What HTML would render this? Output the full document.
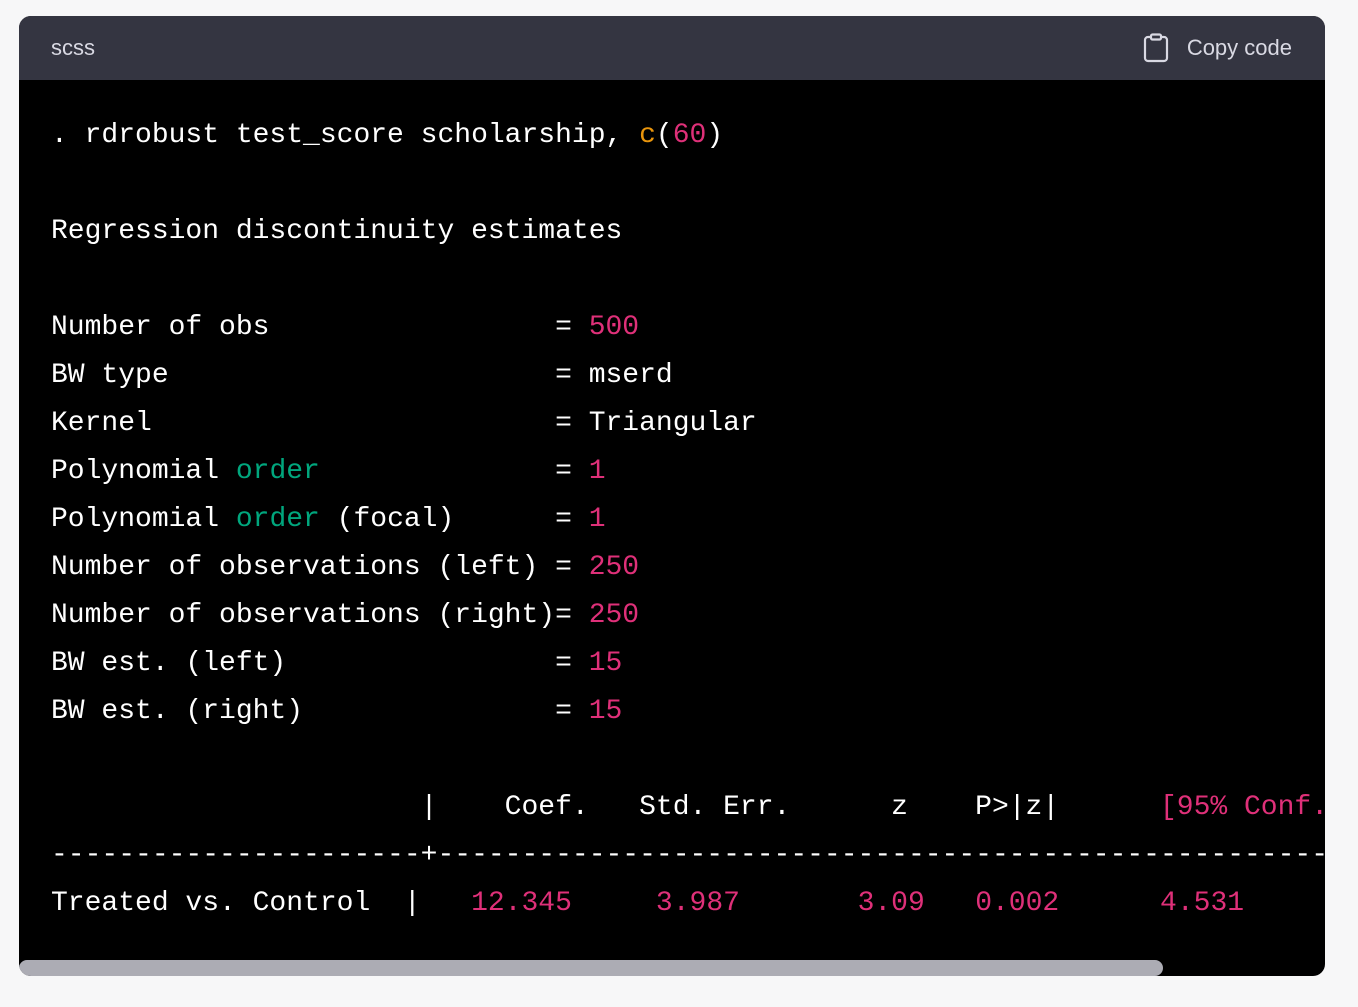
<!DOCTYPE html>
<html><head><style>
body{margin:0;background:#f7f7f8;width:1358px;height:1007px;overflow:hidden}
.box{position:absolute;left:19px;top:16px;width:1306px;height:960px;background:#000;border-radius:12px;overflow:hidden}
.hd{height:64px;background:#343541;color:#d9d9e3;font:22px "Liberation Sans",sans-serif;display:flex;align-items:center;justify-content:space-between;padding:0 33px 0 32px}
.cp{display:flex;align-items:center;gap:18px}
pre{margin:0;position:absolute;left:32px;top:96px;font:28px/48px "Liberation Mono",monospace;color:#fff;white-space:pre}
.p{color:#df3079}.g{color:#00a67d}.o{color:#e9950c}
.sb{position:absolute;left:0;top:944px;width:1144px;height:16px;background:#acacb4;border-radius:8px}
</style></head><body>
<div class="box">
<div class="hd"><span>scss</span><span class="cp"><svg width="26" height="30" viewBox="0 0 26 30" fill="none" stroke="#d9d9e3" stroke-width="2.2" stroke-linejoin="round"><rect x="2" y="4" width="22" height="24" rx="3"/><rect x="8" y="1.5" width="10" height="5" rx="1.5" fill="#343541"/></svg>Copy code</span></div>
<pre>. rdrobust test_score scholarship, <span class="o">c</span>(<span class="p">60</span>)

Regression discontinuity estimates

Number of obs                 = <span class="p">500</span>
BW type                       = mserd
Kernel                        = Triangular
Polynomial <span class="g">order</span>              = <span class="p">1</span>
Polynomial <span class="g">order</span> (focal)      = <span class="p">1</span>
Number of observations (left) = <span class="p">250</span>
Number of observations (right)= <span class="p">250</span>
BW est. (left)                = <span class="p">15</span>
BW est. (right)               = <span class="p">15</span>

                      |    Coef.   Std. Err.      z    P>|z|      <span class="p">[95% Conf. Interval]</span>
----------------------+----------------------------------------------------------------
Treated vs. Control  |   <span class="p">12.345</span>     <span class="p">3.987</span>       <span class="p">3.09</span>   <span class="p">0.002</span>      <span class="p">4.531</span>     <span class="p">20.159</span></pre>
<div class="sb"></div>
</div>
</body></html>
